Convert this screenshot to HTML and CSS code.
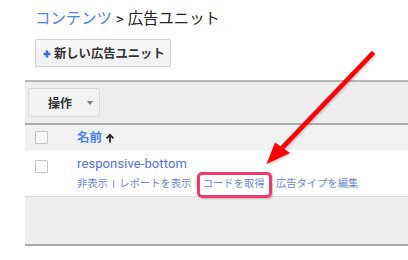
FILE: index.html
```html
<!DOCTYPE html>
<html lang="ja">
<head>
<meta charset="utf-8">
<link rel="stylesheet" href="styles.css">
</head>
<body>
<div class="page">
  <div class="crumbs"><a class="crumb-link">コンテンツ</a> &gt; 広告ユニット</div>
  <div class="btn-new"><svg class="plus" width="8" height="8" viewBox="0 0 8 8"><path d="M4 0.5V7.5M0.5 4H7.5" stroke="#3a6fd0" stroke-width="2.6"/></svg>新しい広告ユニット</div>
  <div class="panel">
    <div class="toolbar">
      <div class="btn-op"><span class="op-label">操作</span><span class="caret"></span></div>
    </div>
    <div class="thead">
      <div class="cell-check"><span class="checkbox"></span></div>
      <div class="th-name">名前<svg class="sort" width="8" height="9" viewBox="0 0 8 9"><path d="M4 8.5V2" stroke="#222" stroke-width="1.8"/><path d="M0.6 4.4L4 0.8L7.4 4.4" fill="none" stroke="#222" stroke-width="1.8"/></svg></div>
    </div>
    <div class="row">
      <div class="cell-check"><span class="checkbox"></span></div>
      <div class="cell-name">
        <div class="unit-name">responsive-bottom</div>
        <div class="actions">
          <span class="act">非表示</span><span class="sep">|</span><span class="act">レポートを表示</span><span class="sep">|</span><span class="act">コードを取得</span><span class="sep">|</span><span class="act">広告タイプを編集</span>
        </div>
      </div>
    </div>
    <div class="empty"></div>
  </div>
  <div class="highlight"></div>
  <svg class="arrow" width="408" height="260" viewBox="0 0 408 260">
    <defs>
      <filter id="sh" x="-20%" y="-20%" width="140%" height="140%">
        <feDropShadow dx="1" dy="1" stdDeviation="1" flood-color="#000" flood-opacity="0.25"/>
      </filter>
    </defs>
    <g filter="url(#sh)">
      <line x1="372" y1="54" x2="283" y2="147" stroke="#ff0000" stroke-width="4.5" stroke-linecap="square"/>
      <polygon points="266.5,164 275,142.5 290,153" fill="#ff0000"/>
    </g>
  </svg>
</div>
</body>
</html>
```
FILE: styles.css
```css
* { box-sizing: border-box; }
html, body { margin: 0; padding: 0; background: #fff; }
body {
  font-family: Roboto, "Noto Sans CJK JP", "Liberation Sans", sans-serif;
  color: #222;
  width: 408px;
  height: 260px;
  overflow: hidden;
}
.page { position: relative; width: 408px; height: 260px; }
.crumbs {
  padding: 8px 0 0 35px;
  font-size: 15.4px;
  line-height: 22px;
  height: 30px;
  color: #222;
  white-space: nowrap;
}
.crumb-link { color: #4a86e8; text-decoration: none; }
.btn-new {
  margin: 9px 0 0 35px;
  width: 136px;
  height: 28px;
  border: 1px solid #d0d0d0;
  border-radius: 2px;
  background: linear-gradient(#f8f8f8, #f0f0f0);
  display: flex;
  align-items: center;
  padding-left: 7px;
  font-size: 12.3px;
  font-weight: bold;
  color: #333;
  white-space: nowrap;
}
.plus { margin: 2px 3px 0 0; flex: none; }
.panel { margin: 13px 0 0 25px; }
.toolbar {
  border-top: 2px solid #b8b8b8;
  border-bottom: 2px solid #aaaaaa;
  background: #eeeeee;
  height: 45px;
  padding: 6px 0 0 3px;
}
.btn-op {
  width: 72px;
  height: 29px;
  border: 1px solid #dadada;
  border-radius: 2px;
  background: #f2f2f2;
  display: flex;
  align-items: center;
  padding-left: 19px;
  font-size: 12px;
  font-weight: bold;
  color: #333;
}
.op-label { width: 39px; }
.caret {
  width: 0; height: 0;
  border-left: 3.5px solid transparent;
  border-right: 3.5px solid transparent;
  border-top: 4px solid #777;
}
.thead {
  height: 25px;
  background: #f1f1f1;
  display: flex;
  align-items: center;
}
.cell-check { width: 52px; padding-left: 10px; display: flex; align-items: center; }
.checkbox {
  display: block;
  width: 13px;
  height: 13px;
  border: 1px solid #c6c6c6;
  background: #fff;
  border-radius: 1px;
}
.thead .checkbox { background: #f7f7f7; }
.th-name {
  color: #4a86e8;
  font-weight: bold;
  font-size: 12.5px;
  line-height: 16px;
  display: flex;
  align-items: center;
}
.sort { margin: 2px 0 0 4px; }
.row {
  height: 47px;
  background: #fff;
  border-bottom: 1px solid #dddddd;
  display: flex;
  align-items: flex-start;
}
.row .cell-check { padding-top: 10px; }
.cell-name { padding-top: 6px; }
.unit-name {
  color: #4f74e3;
  font-size: 13px;
  line-height: 16px;
  letter-spacing: 0.1px;
}
.actions {
  margin-top: 5px;
  font-size: 10.3px;
  line-height: 14px;
  white-space: nowrap;
  display: flex;
  align-items: center;
}
.act { color: #6f86de; }
.sep { color: #666; font-size: 9px; margin: 0 4.6px; }
.empty {
  height: 49px;
  background: #eeeeee;
  border-bottom: 2px solid #aaaaaa;
}
.highlight {
  position: absolute;
  left: 197px;
  top: 172px;
  width: 75px;
  height: 26px;
  border: 3px solid #f0386c;
  border-radius: 5px;
  box-shadow: 1px 1px 2px rgba(0,0,0,0.25);
}
.arrow { position: absolute; left: 0; top: 0; pointer-events: none; }
```
